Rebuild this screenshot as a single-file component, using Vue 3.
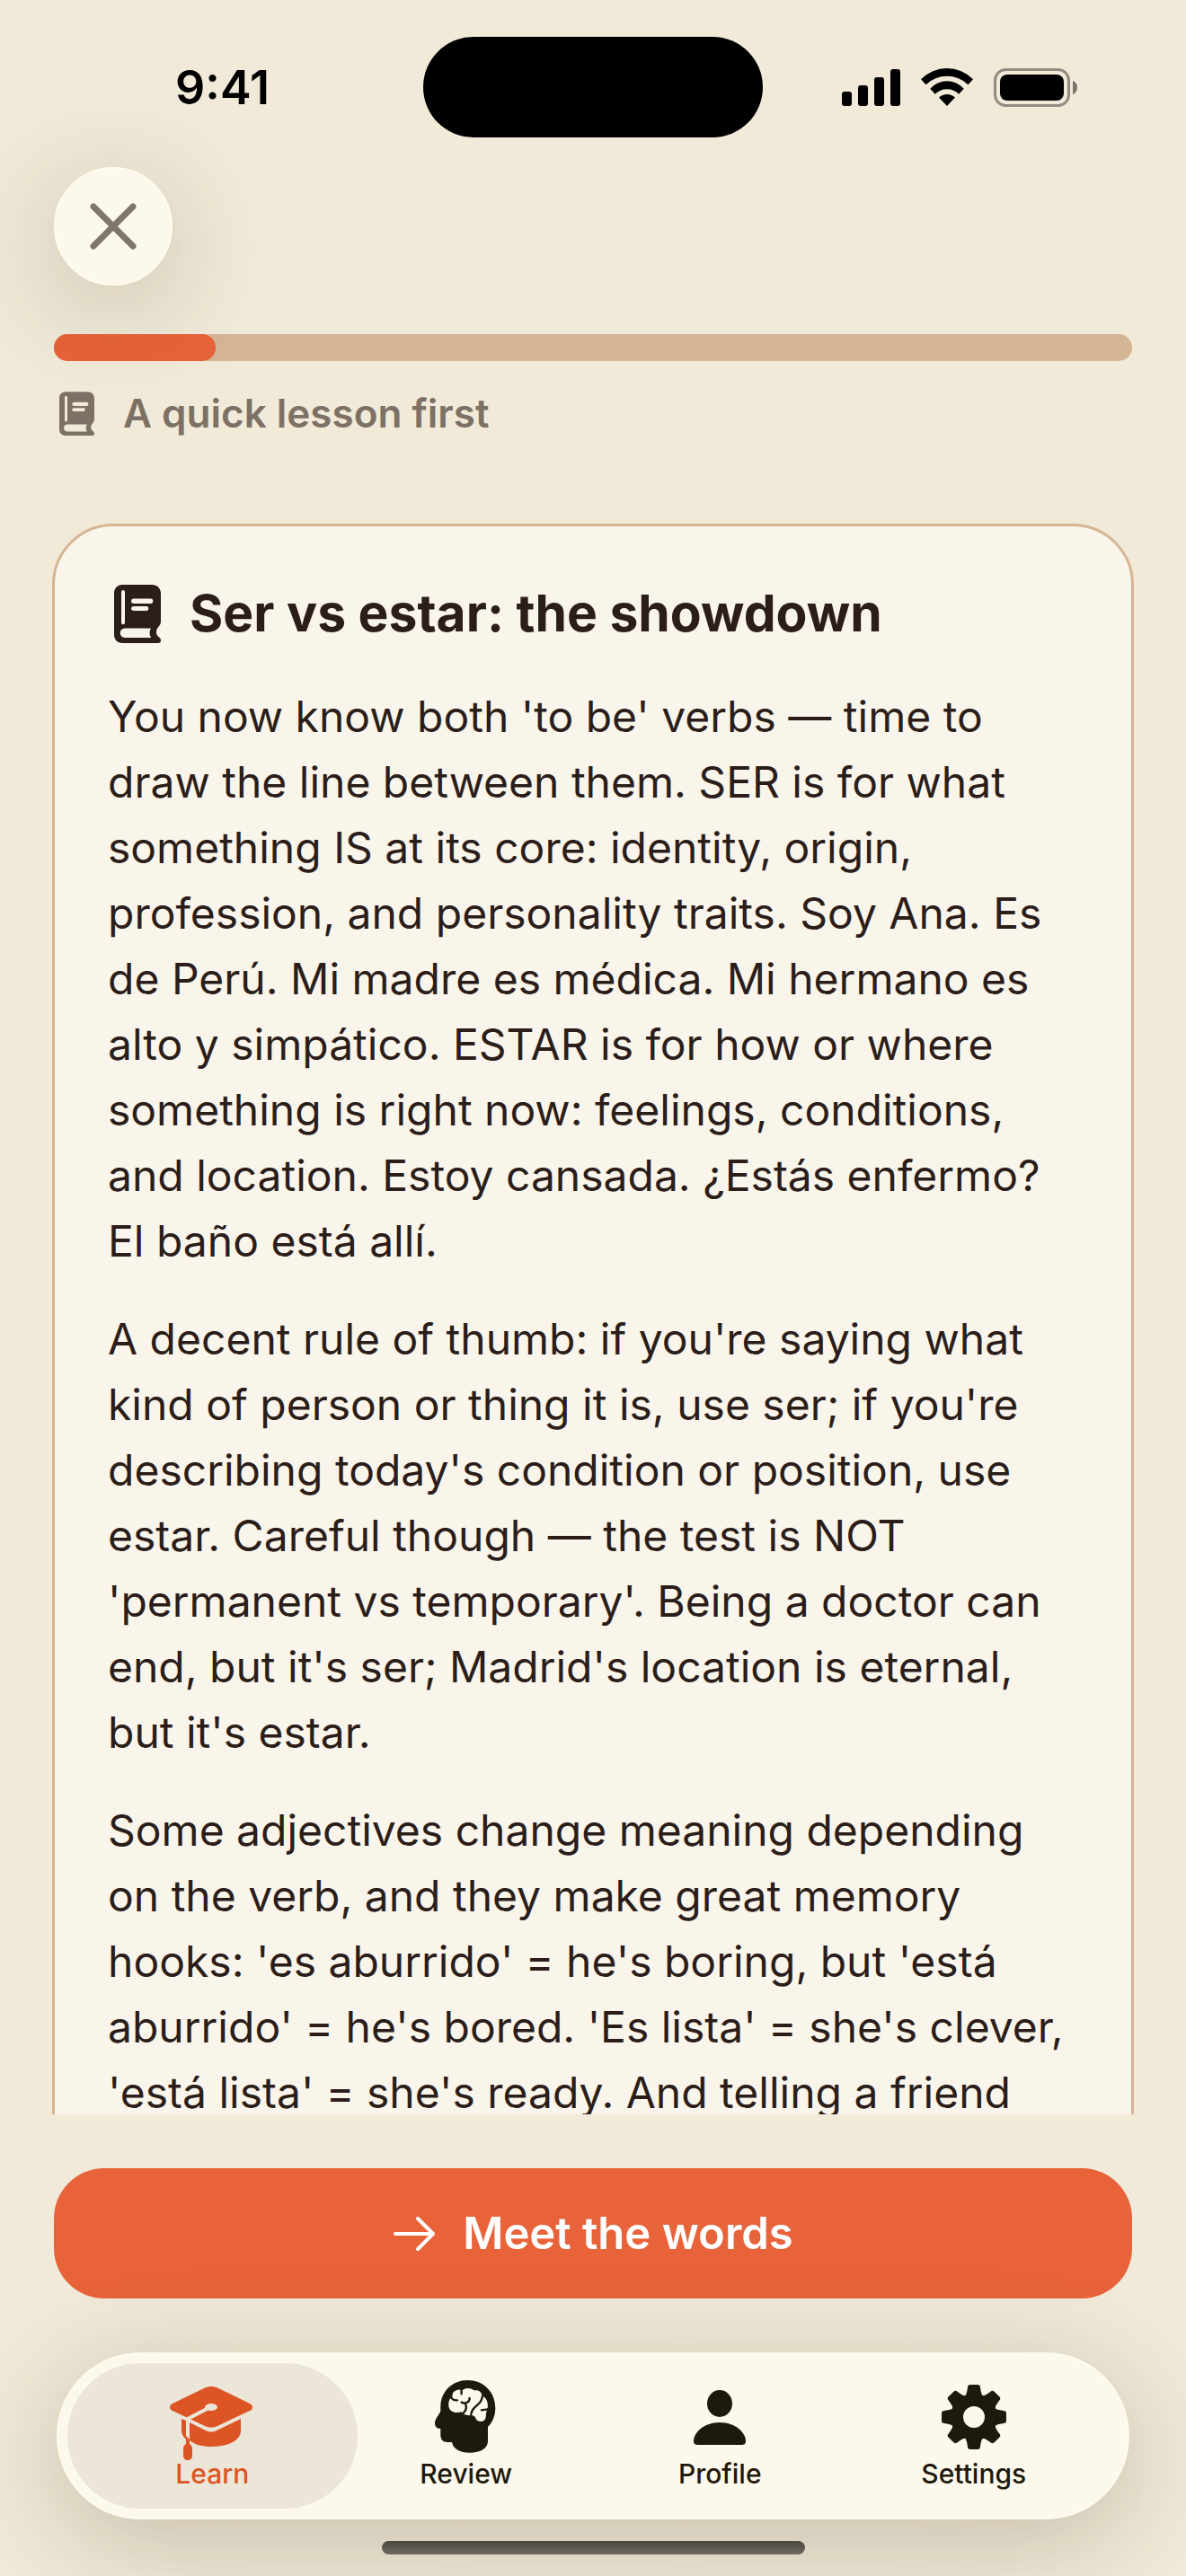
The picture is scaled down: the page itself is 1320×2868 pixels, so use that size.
<template>
    <div class="screen">
        <header class="status">
            <time class="clock">9:41</time>
            <div class="island"></div>
            <div class="indicators">
                <svg width="65" height="42" viewBox="0 0 65 42" role="img" aria-label="Signal">
                    <rect v-for="bar in signal" :key="bar.x" :x="bar.x" :y="bar.y" width="11" :height="42 - bar.y" rx="3" />
                </svg>
                <svg width="58" height="42" viewBox="0 0 58 42" role="img" aria-label="Wi-Fi">
                    <path d="M0 12.300A40.500 40.500 0 0 1 58 12.300L52.500 18.300A34 34 0 0 0 5.500 18.300Z" />
                    <path d="M10.300 22.700A25 25 0 0 1 47.700 22.700L42.300 28.700A19 19 0 0 0 15.700 28.700Z" />
                    <path d="M20 32.500A13 13 0 0 1 38 32.500L29 42Z" />
                </svg>
                <svg width="94" height="43" viewBox="0 0 94 43" role="img" aria-label="Battery">
                    <rect x="1.500" y="1.500" width="82" height="40" rx="12" fill="none" stroke="#000" stroke-opacity=".4" stroke-width="3" />
                    <rect x="7" y="7" width="71" height="29" rx="8" />
                    <path d="M88 14C91 15 93 18 93 21.500C93 25 91 28 88 29Z" fill-opacity=".5" />
                </svg>
            </div>
        </header>

        <div class="top">
            <button class="close" type="button" aria-label="Close">
                <svg width="54" height="54" viewBox="0 0 54 54">
                    <path d="M5 5L49 49M49 5L5 49" fill="none" stroke="currentColor" stroke-width="7" stroke-linecap="round" />
                </svg>
            </button>
        </div>

        <div class="progress" role="progressbar" aria-label="Lesson progress" :aria-valuenow="progress">
            <div class="progress-fill" :style="{ width: progress + '%' }"></div>
        </div>

        <p class="stage">
            <svg class="book" viewBox="0 0 52 65" aria-hidden="true">
                <path :d="bookPath" fill="currentColor" fill-rule="evenodd" />
            </svg>
            <span>A quick lesson first</span>
        </p>

        <main class="scroller">
            <article class="card">
                <h1>
                    <svg class="book" viewBox="0 0 52 65" aria-hidden="true">
                        <path :d="bookPath" fill="currentColor" fill-rule="evenodd" />
                    </svg>
                    <span>Ser vs estar: the showdown</span>
                </h1>
                <p v-for="text in paragraphs" :key="text">{{ text }}</p>
            </article>
        </main>

        <footer class="bottom">
            <button class="primary" type="button">
                <svg width="48" height="40" viewBox="0 0 48 40" aria-hidden="true">
                    <path d="M3 20H45M28 3L45 20L28 37" fill="none" stroke="currentColor" stroke-width="4" stroke-linecap="round" stroke-linejoin="round" />
                </svg>
                <span>Meet the words</span>
            </button>

            <nav class="tabs">
                <a v-for="tab in tabs" :key="tab.id" href="#" class="tab" :class="{ active: tab.id === current }" @click.prevent="current = tab.id">
                    <svg v-if="tab.id === 'learn'" width="92" height="92" viewBox="0 0 92 92" aria-hidden="true">
                        <path d="M12 43V56C12 60 14 63 17 66V45ZM21 47V67C27 72 36 74 45 74C65 74 78 67 78 56V43L51 56C47 58 43 58 39 56Z" fill="currentColor" />
                        <path d="M38 8.500C43 6.500 47 6.500 52 8.500L88 26C92 28 92 32 88 34L52 51C47 53 43 53 38 51L2 34C-2 32-2 28 2 26Z" fill="currentColor" />
                        <path class="cut" d="M44 30L19 43V63" fill="none" stroke-width="4" />
                        <ellipse class="cut-fill" cx="45" cy="30" rx="7" ry="4" />
                        <path d="M17 62L21 66V71C23 72 24 74 24 76V84C24 87 22 89 19 89C16 89 14 87 14 84V76C14 74 15 72 17 71Z" fill="currentColor" />
                    </svg>
                    <svg v-else-if="tab.id === 'review'" width="92" height="92" viewBox="0 0 92 92" aria-hidden="true">
                        <path d="M47.300 0C65 0 78.300 13 78.300 31C78.300 40 75 47 70 52V68C70 76 62 80.700 50 80.700C38 80.700 31 76 30 69H25C20 69 17.300 66 17.300 61V54C13 54 11 51 11 48C11 43 15.500 39 17.300 34.500V29C17.300 13 30 0 47.300 0Z" fill="currentColor" />
                        <g transform="translate(-12.75 -20) scale(.3333)" stroke-linecap="round" stroke-linejoin="round">
                            <path class="cut-fill" d="M158 92C142 90 128 98 130 114C118 122 115 138 118 150C122 166 142 172 160 166C166 174 176 178 190 178C200 176 206 180 208 188C214 200 234 202 240 188C244 178 240 172 244 164C250 152 250 130 238 118C232 114 230 118 228 112C228 96 214 92 202 94C190 84 172 86 166 92Z" />
                            <path d="M160 90V106M126 118C132 127 138 128 146 127M187 120C188 134 172 140 160 134M173 138C178 150 176 162 166 170M229 116C230 142 190 148 192 178M227 160C234 157 242 160 248 157" fill="none" stroke="currentColor" stroke-width="7" />
                        </g>
                    </svg>
                    <svg v-else-if="tab.id === 'profile'" width="92" height="92" viewBox="0 0 92 92" aria-hidden="true">
                        <ellipse cx="46" cy="26" rx="14" ry="15" fill="currentColor" />
                        <path d="M46 47C63 47 75 58 75 68C75 71 73 72 70 72H22C19 72 17 71 17 68C17 58 29 47 46 47Z" fill="currentColor" />
                    </svg>
                    <svg v-else width="92" height="92" viewBox="0 0 92 92" aria-hidden="true">
                        <g fill="currentColor" transform="translate(46 41)">
                            <path v-for="n in 8" :key="n" :transform="`rotate(${n * 45})`" d="M-11-22C-9-24-8-26-7-33C-7-35-6-36-4-36H4C6-36 7-35 7-33C8-26 9-24 11-22Z" />
                            <path d="M0-26A26 26 0 1 0 0 26A26 26 0 1 0 0-26ZM0-12A12 12 0 1 1 0 12A12 12 0 1 1 0-12Z" fill-rule="evenodd" />
                        </g>
                    </svg>
                    <span>{{ tab.label }}</span>
                </a>
            </nav>

            <div class="home-bar"></div>
        </footer>
    </div>
</template>

<script setup>
import { ref } from 'vue';

const progress = ref(15);
const current = ref('learn');

const signal = [
    { x: 0, y: 26 },
    { x: 18, y: 19 },
    { x: 36, y: 10 },
    { x: 54, y: 1 },
];

const tabs = [
    { id: 'learn', label: 'Learn' },
    { id: 'review', label: 'Review' },
    { id: 'profile', label: 'Profile' },
    { id: 'settings', label: 'Settings' },
];

// closed book: cover, spine line, two title lines, page edge
const bookPath = 'M9 0H42C48 0 52 4 52 10V41C52 46 47 47 47 53C47 58 52 58 52 62C52 64 51 65 49 65H9C4 65 0 61 0 56V9C0 4 4 0 9 0Z'
    + 'M10 6C9 6 8 7 8 8V42C8 45 12 45 12 42V8C12 7 11 6 10 6Z'
    + 'M22 15.500C18 15.500 18 21 22 21H41C44 21 44 15.500 41 15.500Z'
    + 'M22 24C18 24 18 29 22 29H36C39 29 39 24 36 24Z'
    + 'M12 48.500C5 48.500 5 59 12 59H41C39 55 39 52 41 48.500Z';

const paragraphs = [
    "You now know both 'to be' verbs — time to draw the line between them. SER is for what something IS at its core: identity, origin, profession, and personality traits. Soy Ana. Es de Perú. Mi madre es médica. Mi hermano es alto y simpático. ESTAR is for how or where something is right now: feelings, conditions, and location. Estoy cansada. ¿Estás enfermo? El baño está allí.",
    "A decent rule of thumb: if you're saying what kind of person or thing it is, use ser; if you're describing today's condition or position, use estar. Careful though — the test is NOT 'permanent vs temporary'. Being a doctor can end, but it's ser; Madrid's location is eternal, but it's estar.",
    "Some adjectives change meaning depending on the verb, and they make great memory hooks: 'es aburrido' = he's boring, but 'está aburrido' = he's bored. 'Es lista' = she's clever, 'está lista' = she's ready. And telling a friend",
];
</script>

<style>
body {
    margin: 0;
    background: #f1ead8;
}
</style>

<style scoped>
.screen {
    display: flex;
    flex-direction: column;
    height: 100vh;
    overflow: hidden;
    background: #f1ead8;
    color: #2b1e1a;
    font-family: Inter, "Liberation Sans", sans-serif;
}

svg {
    display: block;
    flex: none;
    overflow: visible;
}

.status {
    display: grid;
    grid-template-columns: 1fr 378px 1fr;
    align-items: center;
    height: 112px;
    padding: 41px 0 33px;
    color: #000;
}

.clock {
    padding-left: 24px;
    text-align: center;
    font-size: 52px;
    font-weight: 600;
}

.island {
    height: 112px;
    border-radius: 56px;
    background: #000;
}

.indicators {
    display: flex;
    justify-content: center;
    gap: 23px;
    padding-right: 32px;
}

.top {
    position: relative;
    z-index: 1;
    padding: 0 60px;
}

.close {
    display: grid;
    place-items: center;
    width: 132px;
    height: 132px;
    padding: 0;
    border: 2px solid #fffbec;
    border-radius: 50%;
    background: #fdf8ec;
    box-shadow: 0 24px 120px rgba(60, 40, 20, .24);
    color: #7f756b;
}

.progress {
    height: 30px;
    margin: 54px 60px 0;
    border-radius: 15px;
    background: #d4b594;
}

.progress-fill {
    height: 100%;
    border-radius: 15px;
    background: #e8633a;
}

.stage {
    display: flex;
    align-items: center;
    gap: 32px;
    margin: 30px 66px 0;
    color: #7d7165;
    font-size: 44px;
    font-weight: 600;
    line-height: 56px;
}

.stage .book {
    width: 39px;
    height: 49px;
}

.scroller {
    flex: 1;
    min-height: 0;
    margin-top: 36px;
    padding: 59px 58px 0;
    overflow-y: auto;
    scrollbar-width: none;
}

.card {
    padding: 57px 59px;
    border: 3px solid #d4b594;
    border-radius: 68px;
    background: #faf5ea;
}

.card h1 {
    display: flex;
    align-items: center;
    gap: 32px;
    margin: 0 0 38px;
    padding-left: 7px;
    font-size: 57px;
    font-weight: 700;
    line-height: 80px;
}

.card .book {
    width: 52px;
    height: 65px;
}

.card p {
    margin: 0 0 36px;
    font-size: 48px;
    line-height: 73px;
}

.bottom {
    display: flex;
    flex-direction: column;
    padding: 60px 60px 24px;
}

.primary {
    display: flex;
    align-items: center;
    justify-content: center;
    gap: 30px;
    height: 145px;
    border: 0;
    border-radius: 56px;
    background: #e8633a;
    color: #fff;
    font-family: inherit;
    font-size: 49px;
    font-weight: 600;
}

.tabs {
    display: flex;
    margin: 60px 3px 24px;
    padding: 10px 30px;
    border: 2px solid #fffbec;
    border-radius: 93px;
    background: #fdf8ec;
    box-shadow: 0 24px 120px rgba(60, 40, 20, .24);
}

.tab {
    position: relative;
    z-index: 0;
    flex: 1;
    display: flex;
    flex-direction: column;
    align-items: center;
    height: 143px;
    padding-top: 19px;
    color: #1e190d;
    font-size: 30px;
    font-weight: 500;
    line-height: 36px;
    text-decoration: none;
}

.tab svg {
    margin-bottom: -6px;
}

.tab.active {
    color: #dd5525;
}

.tab.active::before {
    content: "";
    position: absolute;
    z-index: -1;
    inset: 0 -20px;
    border-radius: 81px;
    background: #ece6d9;
}

.cut {
    stroke: #fdf8ec;
}

.cut-fill {
    fill: #fdf8ec;
}

.active .cut {
    stroke: #ece6d9;
}

.active .cut-fill {
    fill: #ece6d9;
}

.home-bar {
    align-self: center;
    width: 471px;
    height: 15px;
    border-radius: 8px;
    background: linear-gradient(#47483e, #716860);
}
</style>
